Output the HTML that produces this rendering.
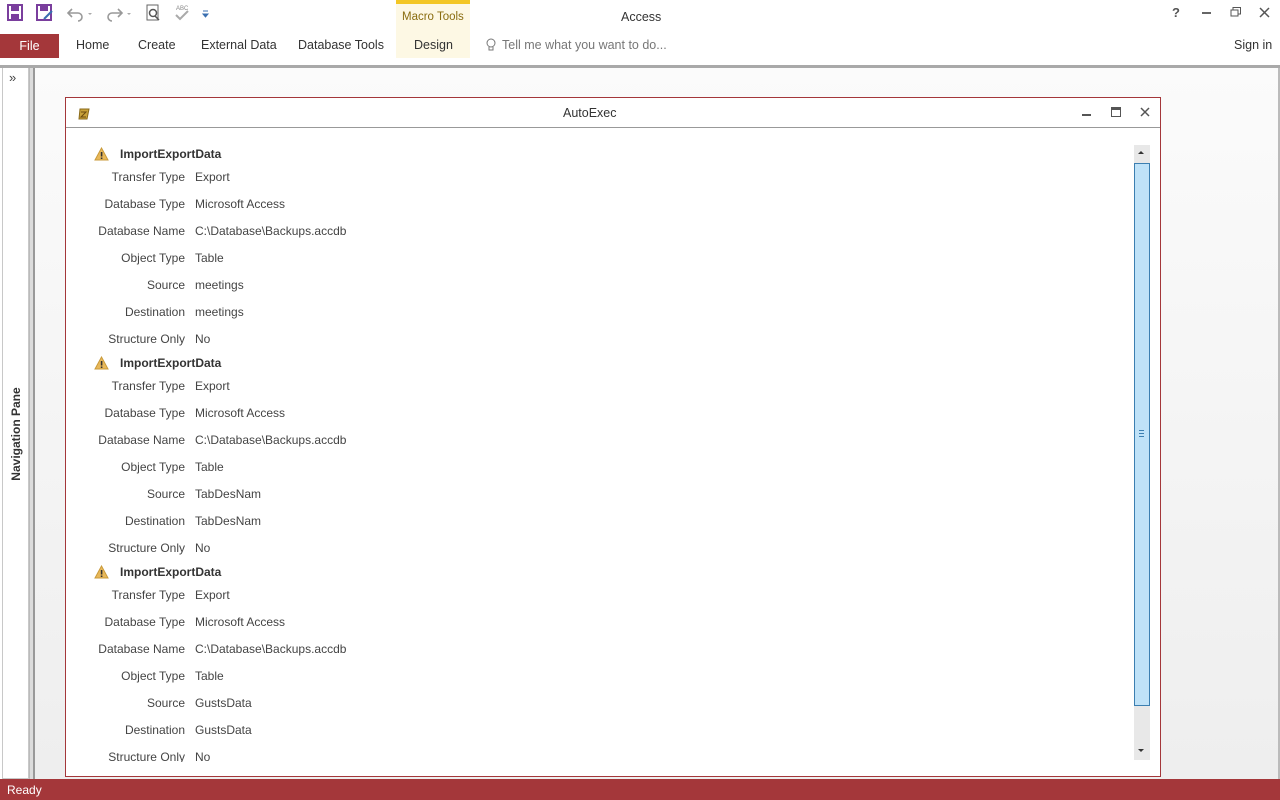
<!DOCTYPE html>
<html><head><meta charset="utf-8"><style>
*{margin:0;padding:0;box-sizing:border-box}
body{width:1280px;height:800px;position:relative;overflow:hidden;background:#fff;font-family:"Liberation Sans",sans-serif;color:#444;font-size:12px}
.a{position:absolute}
.tab{position:absolute;top:38px;font-size:12.5px;color:#333}
.l{position:absolute;width:105px;text-align:right;left:80px;height:16px;line-height:16px}
.v{position:absolute;left:195px;height:16px;line-height:16px}
.h{position:absolute;left:120px;font-weight:bold;color:#333;height:16px;line-height:16px}
.w{position:absolute;left:94px;width:15px;height:14px}
</style></head><body>
<!-- quick access -->
<svg class="a" style="left:6px;top:3px" width="210" height="20">
<rect x="2" y="2" width="14" height="15" fill="none" stroke="#7a3e9d" stroke-width="2"/><rect x="5" y="3" width="8" height="5" fill="#7a3e9d"/><rect x="5" y="11" width="8" height="5" fill="#7a3e9d"/>
<rect x="31" y="2" width="14" height="15" fill="none" stroke="#7a3e9d" stroke-width="2"/><rect x="34" y="3" width="8" height="5" fill="#7a3e9d"/><path d="M38 16 L46 8" stroke="#3a6fb0" stroke-width="2"/>
<path d="M66 6 L62 10 L66 14 M62 10 H72 A4 4 0 0 1 72 18" fill="none" stroke="#999" stroke-width="1.6"/><path d="M82 10 l2 2 l2 -2z" fill="#aaa"/>
<path d="M112 6 L116 10 L112 14 M116 10 H106 A4 4 0 0 0 106 18" fill="none" stroke="#999" stroke-width="1.6"/><path d="M121 10 l2 2 l2 -2z" fill="#aaa"/>
<rect x="141" y="2" width="11" height="15" fill="none" stroke="#666"/><circle cx="147" cy="10" r="3.5" fill="none" stroke="#555" stroke-width="1.5"/><path d="M149 13 L153 17" stroke="#555" stroke-width="1.5"/>
<text x="170" y="7" font-size="6" fill="#888" font-family="Liberation Sans">ABC</text><path d="M170 12 L174 16 L182 8" fill="none" stroke="#aaa" stroke-width="2"/>
<path d="M197 8 h5 M197 11 l2.5 3 l2.5 -3z" stroke="#3a6fb0" fill="#3a6fb0"/>
</svg>
<div class="a" style="left:396px;top:0;width:74px;height:58px;background:#fdf8e4;border-top:4px solid #f3c624"></div>
<div class="a" style="left:402px;top:11px;font-size:11.5px;color:#8a6d10">Macro Tools</div>
<div class="a" style="left:621px;top:10px;font-size:12.5px;color:#333">Access</div>
<div class="a" style="left:1172px;top:5px;font-size:13px;color:#555;font-weight:bold">?</div>
<div class="a" style="left:1202px;top:12px;width:9px;height:2px;background:#666"></div>
<svg class="a" style="left:1230px;top:6px" width="12" height="12"><rect x="1" y="4" width="7" height="6" fill="none" stroke="#555"/><path d="M3 4 V1.5 H10.5 V8 H8" fill="none" stroke="#555"/></svg>
<svg class="a" style="left:1259px;top:7px" width="11" height="11"><path d="M1 1 L10 10 M10 1 L1 10" stroke="#555" stroke-width="1.5"/></svg>
<div class="a" style="left:0;top:34px;width:59px;height:24px;background:#a4373a;color:#fff;font-size:12.5px;text-align:center;line-height:24px">File</div>
<div class="tab" style="left:76px">Home</div>
<div class="tab" style="left:138px">Create</div>
<div class="tab" style="left:201px">External Data</div>
<div class="tab" style="left:298px">Database Tools</div>
<div class="tab" style="left:414px">Design</div>
<svg class="a" style="left:485px;top:38px" width="12" height="15"><circle cx="6" cy="5" r="4" fill="none" stroke="#777"/><path d="M4 9 V12 H8 V9" fill="none" stroke="#777"/></svg>
<div class="tab" style="left:502px;color:#777">Tell me what you want to do...</div>
<div class="tab" style="left:1234px">Sign in</div>
<!-- separator -->
<div class="a" style="left:0;top:65px;width:1280px;height:3px;background:#a9a9a9"></div>
<!-- workspace -->
<div class="a" style="left:35px;top:68px;width:1243px;height:711px;background:linear-gradient(#fbfbfb,#eeeeee)"></div>
<div class="a" style="left:1278px;top:68px;width:2px;height:711px;background:#bbb"></div>
<!-- nav pane -->
<div class="a" style="left:2px;top:68px;width:27px;height:711px;background:#fff;border:1px solid #c8c8c8;border-top:none"></div>
<div class="a" style="left:29px;top:68px;width:6px;height:711px;background:#dcdcdc;border-left:1px solid #bbb;border-right:2px solid #999"></div>
<div class="a" style="left:9px;top:70px;font-size:13px;color:#444">»</div>
<div class="a" style="left:-34px;top:427px;width:100px;text-align:center;transform:rotate(-90deg);font-weight:bold;font-size:12px;color:#333">Navigation Pane</div>
<!-- window -->
<div class="a" style="left:65px;top:97px;width:1096px;height:680px;background:#fff;border:1px solid #a4373a"></div>
<div class="a" style="left:66px;top:127px;width:1094px;height:1px;background:#999"></div>
<svg class="a" style="left:78px;top:108px" width="12" height="12"><path d="M2 1 H11 L9 11 H1z" fill="#c9a23a" stroke="#8a6a1a"/><path d="M3 4 H8 L3 9 H8" stroke="#6a4a10" fill="none"/></svg>
<div class="a" style="left:563px;top:106px;font-size:12.5px;color:#333">AutoExec</div>
<div class="a" style="left:1082px;top:114px;width:9px;height:1.5px;background:#555"></div>
<div class="a" style="left:1111px;top:107px;width:10px;height:10px;border:1px solid #555;border-top:3px solid #555"></div>
<svg class="a" style="left:1140px;top:107px" width="10" height="10"><path d="M1 1 L9 9 M9 1 L1 9" stroke="#555" stroke-width="1.5"/></svg>
<!-- scrollbar -->
<div class="a" style="left:1134px;top:145px;width:16px;height:615px;background:#e8e8e8"></div>
<div class="a" style="left:1138px;top:151px;border:3px solid transparent;border-bottom:3px solid #333;border-top:none"></div>
<div class="a" style="left:1138px;top:749px;border:3px solid transparent;border-top:3px solid #333;border-bottom:none"></div>
<div class="a" style="left:1134px;top:163px;width:16px;height:543px;background:#bfe2f8;border:1px solid #3c7fb1"></div>
<div class="a" style="left:1139px;top:430px;width:5px;height:7px;border-top:1px solid #3c7fb1;border-bottom:1px solid #3c7fb1"></div>
<div class="a" style="left:1139px;top:433px;width:5px;height:1px;background:#3c7fb1"></div>
<!-- content -->
<div class="a" style="left:0;top:128px;width:1134px;height:634px;overflow:hidden">
<div class="a" style="left:0;top:-128px;width:1134px;height:800px">
<svg class="w" style="top:147px" viewBox="0 0 15 14"><path d="M7.5 1 L14 13 H1z" fill="#e8b85a" stroke="#c99a3a"/><rect x="6.8" y="5" width="1.6" height="4.5" fill="#333"/><rect x="6.8" y="10.5" width="1.6" height="1.5" fill="#333"/></svg>
<div class="h" style="top:146px">ImportExportData</div>
<div class="l" style="top:169px">Transfer Type</div><div class="v" style="top:169px">Export</div>
<div class="l" style="top:196px">Database Type</div><div class="v" style="top:196px">Microsoft Access</div>
<div class="l" style="top:223px">Database Name</div><div class="v" style="top:223px">C:\Database\Backups.accdb</div>
<div class="l" style="top:250px">Object Type</div><div class="v" style="top:250px">Table</div>
<div class="l" style="top:277px">Source</div><div class="v" style="top:277px">meetings</div>
<div class="l" style="top:304px">Destination</div><div class="v" style="top:304px">meetings</div>
<div class="l" style="top:331px">Structure Only</div><div class="v" style="top:331px">No</div>
<svg class="w" style="top:356px" viewBox="0 0 15 14"><path d="M7.5 1 L14 13 H1z" fill="#e8b85a" stroke="#c99a3a"/><rect x="6.8" y="5" width="1.6" height="4.5" fill="#333"/><rect x="6.8" y="10.5" width="1.6" height="1.5" fill="#333"/></svg>
<div class="h" style="top:355px">ImportExportData</div>
<div class="l" style="top:378px">Transfer Type</div><div class="v" style="top:378px">Export</div>
<div class="l" style="top:405px">Database Type</div><div class="v" style="top:405px">Microsoft Access</div>
<div class="l" style="top:432px">Database Name</div><div class="v" style="top:432px">C:\Database\Backups.accdb</div>
<div class="l" style="top:459px">Object Type</div><div class="v" style="top:459px">Table</div>
<div class="l" style="top:486px">Source</div><div class="v" style="top:486px">TabDesNam</div>
<div class="l" style="top:513px">Destination</div><div class="v" style="top:513px">TabDesNam</div>
<div class="l" style="top:540px">Structure Only</div><div class="v" style="top:540px">No</div>
<svg class="w" style="top:565px" viewBox="0 0 15 14"><path d="M7.5 1 L14 13 H1z" fill="#e8b85a" stroke="#c99a3a"/><rect x="6.8" y="5" width="1.6" height="4.5" fill="#333"/><rect x="6.8" y="10.5" width="1.6" height="1.5" fill="#333"/></svg>
<div class="h" style="top:564px">ImportExportData</div>
<div class="l" style="top:587px">Transfer Type</div><div class="v" style="top:587px">Export</div>
<div class="l" style="top:614px">Database Type</div><div class="v" style="top:614px">Microsoft Access</div>
<div class="l" style="top:641px">Database Name</div><div class="v" style="top:641px">C:\Database\Backups.accdb</div>
<div class="l" style="top:668px">Object Type</div><div class="v" style="top:668px">Table</div>
<div class="l" style="top:695px">Source</div><div class="v" style="top:695px">GustsData</div>
<div class="l" style="top:722px">Destination</div><div class="v" style="top:722px">GustsData</div>
<div class="l" style="top:749px">Structure Only</div><div class="v" style="top:749px">No</div>
</div></div>
<!-- status bar -->
<div class="a" style="left:0;top:779px;width:1280px;height:21px;background:#a4373a"></div>
<div class="a" style="left:7px;top:783px;color:#fff;font-size:12px">Ready</div>
</body></html>
